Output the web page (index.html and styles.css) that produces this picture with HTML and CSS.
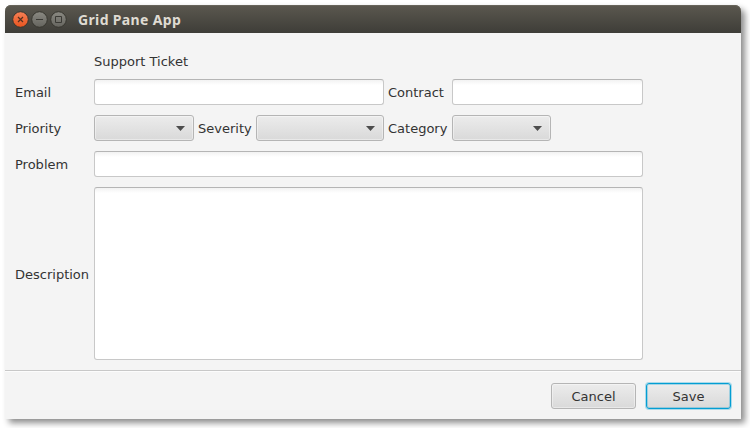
FILE: index.html
```html
<!DOCTYPE html>
<html lang="en">
<head>
<meta charset="utf-8">
<title>Grid Pane App</title>
<link rel="stylesheet" href="styles.css">
</head>
<body>
<div class="window">
  <header class="titlebar">
    <svg class="controls" width="56" height="17" viewBox="0 0 56 17">
      <defs>
        <linearGradient id="close" x1="0" y1="0" x2="0" y2="1"><stop offset="0" stop-color="#f58056"/><stop offset="1" stop-color="#e9541f"/></linearGradient>
        <linearGradient id="plain" x1="0" y1="0" x2="0" y2="1"><stop offset="0" stop-color="#8a8982"/><stop offset="1" stop-color="#65645e"/></linearGradient>
      </defs>
      <g stroke="#37362f" stroke-width="1">
        <circle cx="8.5" cy="8.5" r="7.8" fill="url(#close)"/>
        <circle cx="27.5" cy="8.5" r="7.8" fill="url(#plain)"/>
        <circle cx="46.5" cy="8.5" r="7.8" fill="url(#plain)"/>
      </g>
      <path d="M6 6l5 5M11 6l-5 5" stroke="#54301f" stroke-width="1.2" fill="none"/>
      <path d="M24 8.5h7" stroke="#3b3a35" fill="none"/>
      <path d="M43.5 5.5h6v6h-6z" stroke="#3b3a35" fill="none"/>
    </svg>
    <h1 class="title">Grid Pane App</h1>
  </header>
  <main class="form">
    <span class="heading">Support Ticket</span>
    <label class="start">Email</label>
    <div class="field span3"></div>
    <label>Contract</label>
    <div class="field"></div>
    <label class="start">Priority</label>
    <div class="combo"></div>
    <label>Severity</label>
    <div class="combo"></div>
    <label>Category</label>
    <div class="combo short"></div>
    <label class="start">Problem</label>
    <div class="field span5"></div>
    <label class="start">Description</label>
    <div class="field span5"></div>
  </main>
  <footer class="actions">
    <button class="button">Cancel</button>
    <button class="button default">Save</button>
  </footer>
</div>
</body>
</html>
```
FILE: styles.css
```css
* { box-sizing: border-box; }
body {
  margin: 0;
  height: 428px;
  padding: 5px;
  background: #fff;
  color: #333;
  font: 13px/16px "DejaVu Sans", sans-serif;
  overflow: hidden;
}
.window {
  width: 736px;
  height: 414px;
  display: flex;
  flex-direction: column;
  background: #f4f4f4;
  border-radius: 6px 6px 0 0;
  box-shadow: 4px 4px 6px rgba(0, 0, 0, .45);
}
.titlebar {
  height: 28px;
  display: flex;
  align-items: center;
  padding: 1px 0 0 7px;
  background: linear-gradient(#5b584f, #3e3d38);
  border-radius: 6px 6px 0 0;
  box-shadow: inset 0 1px #67645a;
}
.controls { display: block; }
.title {
  margin: 0 0 0 10px;
  color: #dfdbd2;
  font: bold 14px/18px "Noto Sans", sans-serif;
  letter-spacing: .35px;
}
.form {
  flex: 1;
  display: grid;
  grid-template-columns: 75px 100px 54px 128px 60px 191px;
  grid-template-rows: 16px 26px 26px 26px 173px;
  gap: 10px 4px;
  padding: 20px 10px 0;
  align-items: center;
}
.heading { grid-column: 2 / -1; }
.heading, label { padding-top: 2px; }
.start { grid-column: 1; }
.field, .combo {
  align-self: stretch;
  border: 1px solid #c8c8c8;
  border-top-color: #b5b5b5;
  border-radius: 3px;
}
.field {
  background: linear-gradient(#f2f2f2, #fff 5px);
}
.span3 { grid-column: span 3; }
.span5 { grid-column: span 5; }
.combo {
  display: flex;
  align-items: center;
  justify-content: flex-end;
  padding-right: 8px;
}
.combo, .button {
  border: 1px solid #b5b5b5;
  border-radius: 3px;
  background: linear-gradient(#ececec, #d9d9d9);
  box-shadow: inset 0 0 0 1px rgba(255, 255, 255, .4);
}
.combo::after {
  content: "";
  width: 9px;
  height: 5px;
  margin-top: 1px;
  background: #4d4d4d;
  clip-path: polygon(0 0, 100% 0, 50% 100%);
}
.short { width: 99px; }
.actions {
  height: 49px;
  display: flex;
  justify-content: flex-end;
  gap: 10px;
  padding: 12px 10px 0;
  border-top: 1px solid #c8c8c8;
  box-shadow: inset 0 1px #fcfcfc;
}
.button {
  width: 85px;
  height: 26px;
  padding: 2px 0 0;
  color: #333;
  font: inherit;
}
.default {
  border-color: #039ed3;
  box-shadow: inset 0 0 0 1px rgba(3, 158, 211, .3), 0 0 0 1px rgba(3, 158, 211, .3);
}
```
